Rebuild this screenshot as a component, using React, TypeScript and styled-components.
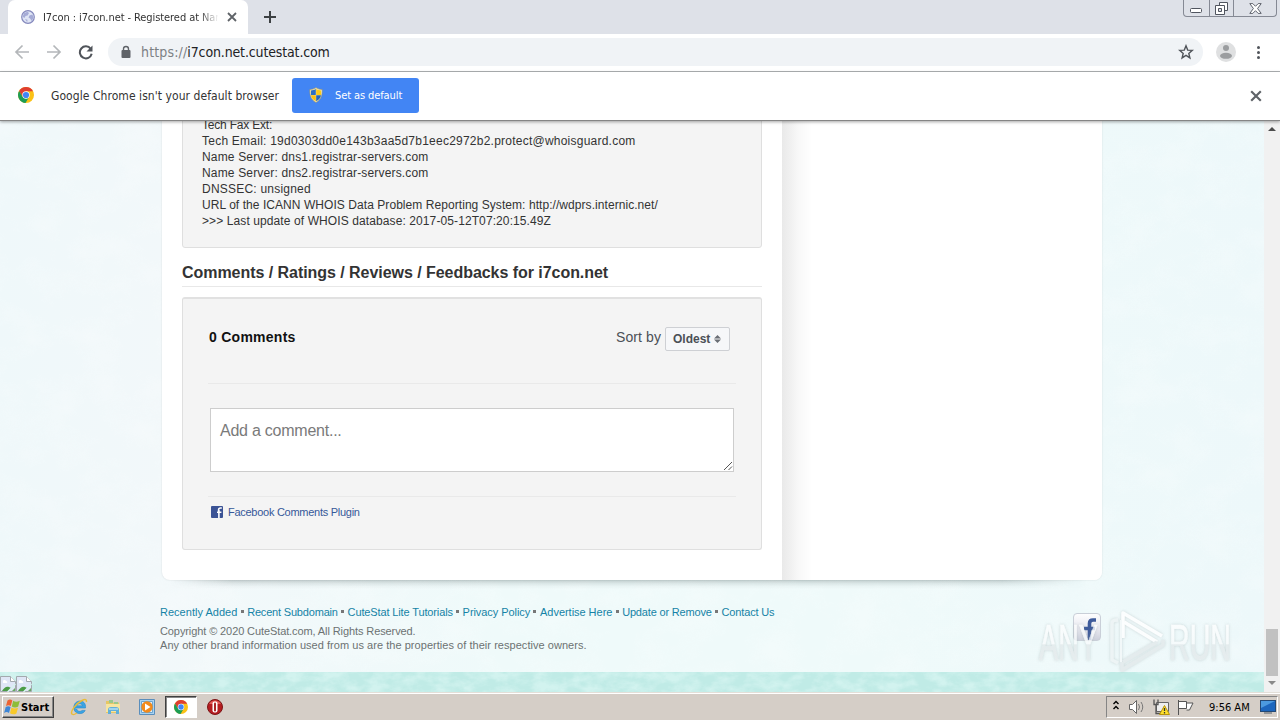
import React from "react"
import styled, { createGlobalStyle, css } from "styled-components"

const ui = `"DejaVu Sans Condensed", "DejaVu Sans", sans-serif`
const arial = `"Liberation Sans", Arial, sans-serif`

const GlobalStyle = createGlobalStyle`
	* {
		box-sizing: border-box;
	}

	body {
		margin: 0;
		overflow: hidden;
	}
`

const StyledScreen = styled.div`
	width: 1280px;
	height: 720px;
	display: flex;
	flex-direction: column;
	position: relative;
	overflow: hidden;
	background: #fff;
	font-family: ${arial};
`

const Text = styled.span<{ $size: number; $gap?: number; $color?: string; $bold?: boolean; $ui?: boolean }>`
	font-family: ${(props) => (props.$ui ? ui : arial)};
	font-size: ${(props) => props.$size}px;
	letter-spacing: ${(props) => props.$gap || 0}px;
	color: ${(props) => props.$color || "#333"};
	font-weight: ${(props) => (props.$bold ? 700 : 400)};
	white-space: pre;
`

/* Browser chrome */

const StyledTabStrip = styled.div`
	height: 34px;
	flex: none;
	display: flex;
	background: #dee1e8;
	padding-left: 8px;
`
const StyledTab = styled.div`
	width: 240px;
	height: 34px;
	display: flex;
	align-items: center;
	padding: 0 11px 0 13px;
	background: #fff;
	border-radius: 7px 7px 0 0;
`
const StyledTabTitle = styled.div`
	width: 175px;
	margin-left: 8px;
	overflow: hidden;
	line-height: 16px;
	mask-image: linear-gradient(90deg, #000 156px, transparent 176px);
`
const StyledTabClose = styled.div`
	margin-left: auto;
	display: flex;
`
const StyledNewTab = styled.div`
	display: flex;
	align-items: center;
	padding-left: 15px;
`
const StyledWindowButtons = styled.div`
	display: flex;
	margin: 0 3px 0 auto;
	width: 94px;
	height: 17px;
	border: 1px solid #858994;
	border-top: 0;
	border-radius: 0 0 4px 4px;
`
const StyledWindowButton = styled.div<{ $width: number }>`
	width: ${(props) => props.$width}px;
	display: flex;
	align-items: center;
	justify-content: center;

	& + & {
		border-left: 1px solid #858994;
	}
`
const StyledToolbar = styled.div`
	height: 38px;
	flex: none;
	display: flex;
	align-items: center;
	padding: 0 14px 1px;
	border-bottom: 1px solid #b0b3b5;

	> svg {
		flex: none;
	}
`
const StyledAddress = styled.div`
	width: 1095px;
	height: 28px;
	display: flex;
	align-items: center;
	margin-left: 14px;
	margin-right: 12px;
	padding: 0 9px 0 12px;
	border-radius: 14px;
	background: #f0f3f6;

	> svg:last-child {
		margin-left: auto;
	}
`
const StyledUrl = styled.div`
	margin-left: 9px;
	line-height: 18px;
`
const StyledInfoBar = styled.div`
	height: 49px;
	flex: none;
	display: flex;
	align-items: center;
	padding: 0 18px 2px;
	border-bottom: 1px solid #858585;
	background: #fff;
	position: relative;
	z-index: 1;
	box-shadow: 0 1px 3px rgba(0, 0, 0, 0.35);
`
const StyledInfoText = styled.div`
	width: 241px;
	margin-left: 17px;
	line-height: 18px;
`
const StyledDefaultButton = styled.div`
	width: 127px;
	height: 35px;
	display: flex;
	align-items: center;
	padding-left: 16px;
	border-radius: 3px;
	background: #4285f4;
`
const StyledButtonText = styled.div`
	margin-left: 11px;
	line-height: 16px;
`
const StyledInfoClose = styled.div`
	display: flex;
	margin-left: auto;
	padding-top: 2px;
`

/* Site */

const StyledViewport = styled.div`
	height: 571px;
	flex: none;
	display: flex;
`
const StyledPage = styled.div`
	width: 1264px;
	height: 571px;
	position: relative;
	overflow: hidden;
	background: linear-gradient(90deg, #eff8fa 0, #f2f8fa 160px, #effafa 500px, #effafa 900px, #edf8fa 1264px);
`
const StyledTexture = styled.svg`
	position: absolute;
	left: 0;
	top: 0;
`
const StyledMain = styled.div`
	height: 551px;
	position: relative;
	padding-left: 162px;
`
const StyledCard = styled.div`
	width: 940px;
	height: 459px;
	display: flex;
	border-radius: 0 0 8px 8px;
	background: #fff;
	box-shadow: 0 0 2px rgba(0, 0, 0, 0.12);
`
const StyledShade = styled.div`
	width: 940px;
	height: 9px;
	background: linear-gradient(rgba(60, 80, 80, 0.26), rgba(70, 90, 90, 0.13) 35%, rgba(80, 100, 100, 0.04) 70%, transparent);
	mask-image: linear-gradient(90deg, transparent 8px, #000 70px, #000 840px, transparent 925px);
`
const StyledContent = styled.div`
	width: 620px;
	padding: 0 20px;
	overflow: hidden;
	border-radius: 0 0 0 8px;
`
const StyledSidebar = styled.div`
	width: 320px;
	border-radius: 0 0 8px;
	background: linear-gradient(90deg, #e9e9e9 0, #f0f0f0 8px, #f8f8f8 16px, #fff 30px);
`
const panel = css`
	border: 1px solid #dfdfdf;
	border-radius: 3px;
	background: #f4f4f4;
`
const StyledWhois = styled.div`
	${panel}
	height: 137px;
	margin-top: -10px;
	padding: 5px 19px;
	display: flex;
	flex-direction: column;
	line-height: 16px;
`
const StyledHeading = styled.div`
	height: 39px;
	margin-bottom: 10px;
	padding-top: 15px;
	border-bottom: 1px solid #e8e8e8;
	line-height: 20px;
`
const StyledComments = styled.div`
	${panel}
	height: 253px;
	padding: 0 25px;
	border-top: 2px solid #e1e1e1;
`
const StyledCommentsHead = styled.div`
	height: 85px;
	padding: 28px 6px 0 1px;
	display: flex;
	align-items: flex-start;
	border-bottom: 1px solid #e9e9e9;
	line-height: 20px;
`
const StyledSort = styled.div`
	display: flex;
	margin-left: auto;
`
const StyledSelect = styled.div`
	width: 65px;
	height: 24px;
	display: flex;
	align-items: center;
	justify-content: space-between;
	margin-left: 4px;
	padding: 0 8px 0 7px;
	border: 1px solid #ced0d4;
	border-radius: 2px;
	background: #f6f7f9;
`
const StyledTextarea = styled.div`
	width: 524px;
	height: 64px;
	display: flex;
	justify-content: space-between;
	margin: 24px 0 24px 2px;
	padding: 12px 0 0 9px;
	border: 1px solid #cdcdcd;
	background: #fff;
	line-height: 20px;

	svg {
		align-self: flex-end;
	}
`
const StyledPlugin = styled.div`
	display: flex;
	align-items: center;
	gap: 5px;
	padding: 8px 0 0 3px;
	border-top: 1px solid #e9e9e9;
	line-height: 14px;
`
const StyledFooter = styled.div`
	display: flex;
	justify-content: space-between;
	width: 941px;
	margin-left: -2px;
	padding-top: 13px;
`
const StyledFooterText = styled.div`
	display: flex;
	flex-direction: column;
	line-height: 14px;
`
const StyledLinks = styled.div`
	height: 19px;
	display: flex;
	align-items: center;
	margin-bottom: 3px;
`
const StyledDot = styled.i`
	width: 3px;
	height: 3px;
	margin: 0 3.6px 1px 3.2px;
	background: #777;
`
const StyledBadge = styled.div`
	width: 28px;
	height: 28px;
	margin-top: 11px;
	display: flex;
	border: 1px solid #c9cfd8;
	border-radius: 4px;
	background: linear-gradient(#fdfdfe, #e7e7ef 60%, #cdd0dc);
`
const StyledStrip = styled.div`
	height: 20px;
	display: flex;
	align-items: center;
	position: relative;
	overflow: hidden;
	padding-top: 3px;
	background: #c0ebe6;

	> svg + svg {
		position: relative;
		flex: none;
	}
`
const StyledScrollbar = styled.div`
	width: 16px;
	display: flex;
	flex-direction: column;
	align-items: center;
	background: #f1f1f1;
	padding: 6px 0 7px;
`
const StyledThumb = styled.div`
	width: 12px;
	height: 47px;
	margin: auto 0 5px;
	background: #c1c1c1;
`
const StyledArrow = styled.i<{ $down?: boolean }>`
	border: 4px solid transparent;
	${(props) =>
		props.$down
			? css`
					border-top-color: #8a8a8a;
					border-bottom: 0;
			  `
			: css`
					border-bottom-color: #4c4c4c;
					border-top: 0;
			  `}
`

/* Desktop */

const StyledTaskbar = styled.div`
	height: 28px;
	flex: none;
	display: flex;
	align-items: center;
	border-top: 1px solid #e3dfd8;
	background: #d5cec7;
	box-shadow: inset 0 1px #fff;
	padding: 1px 2px 0;
`
const StyledStart = styled.div`
	width: 52px;
	height: 22px;
	display: flex;
	align-items: center;
	padding-left: 1px;
	border: 1px solid;
	border-color: #fff #404040 #404040 #fff;
	box-shadow: inset -1px -1px #888;
`
const StyledTask = styled.div<{ $active?: boolean }>`
	width: 32px;
	height: 22px;
	display: flex;
	align-items: center;
	justify-content: center;
	margin-right: 2px;
	border: 1px solid transparent;

	${(props) =>
		props.$active &&
		css`
			background: #fff;
			border-color: #404040 #fff #fff #404040;
			box-shadow: inset 1px 1px #888;
		`}
`
const StyledTasks = styled.div`
	display: flex;
	margin-left: 9px;
`
const StyledTray = styled.div`
	width: 172px;
	height: 22px;
	margin-left: auto;
	display: flex;
	align-items: center;
	padding-left: 5px;
	border: 1px solid;
	border-color: #858585 #fff #fff #858585;

	> svg {
		flex: none;
	}
`
const StyledClock = styled.div`
	width: 51px;
	margin-left: 15px;
	line-height: 16px;
`
const StyledWatermark = styled.svg`
	position: absolute;
	left: 1030px;
	top: 604px;
`

const ChromeIcon = ({ size }: { size: number }) => (
	<svg width={size} height={size} viewBox="0 0 16 16">
		<circle cx="8" cy="8" r="8" fill="#fbc116" />
		<path d="M8 4.2H15A8 8 0 0 0 1.1 4L4.7 10 8 8z" fill="#df3e30" />
		<path d="M1.1 4A8 8 0 0 0 7.5 16L11.2 9.8 8 11.6 4.7 9.9z" fill="#1c9d55" />
		<circle cx="8" cy="8" r="3.7" fill="#fff" />
		<circle cx="8" cy="8" r="3.1" fill="#4285f4" />
	</svg>
)

const GlobeIcon = () => (
	<svg width="14" height="14" viewBox="0 0 14 14">
		<circle cx="7" cy="7" r="6.3" fill="#dfe5f5" stroke="#8589bd" strokeWidth="1.2" />
		<path d="M3 3.2L6.4 1.7 8 3 6.6 5.5 4.5 6 3.5 8 1.6 6.7zM8.4 5.4l3-1 1.2 3-1.9 3.6-1.6-2.6-1.6-.8zM4 9l2.5.8-.3 2.5z" fill="#a5abd6" />
	</svg>
)

const CloseIcon = ({ size, color }: { size: number; color: string }) => (
	<svg width={size} height={size} viewBox="0 0 10 10">
		<path d="M1 1l8 8M9 1L1 9" stroke={color} strokeWidth="1.8" />
	</svg>
)

const ShieldIcon = () => (
	<svg width="16" height="16" viewBox="0 0 16 16">
		<path d="M8 .6C6 2 3.8 2.4 1.8 2.4 1.6 8 2.6 12.6 8 15.5 13.4 12.6 14.4 8 14.2 2.4 12.2 2.4 10 2 8 .6z" fill="#f0e6b4" stroke="#8a8a72" strokeWidth=".6" />
		<path d="M7.8 2C6.2 3 4.6 3.4 3 3.5V8h4.8z" fill="#2d6fc4" />
		<path d="M8.2 2c1.6 1 3.2 1.4 4.8 1.5V8H8.2z" fill="#fcca18" />
		<path d="M3 8.3c.5 2.7 2 4.6 4.8 6V8.3z" fill="#fcc010" />
		<path d="M13 8.3c-.5 2.7-2 4.6-4.8 6V8.3z" fill="#2765b8" />
	</svg>
)

const BrokenImage = () => (
	<svg width="16" height="16" viewBox="0 0 16 16">
		<path d="M.5 15.5V.5h10l5 5v10z" fill="#dfe6f6" stroke="#a3a9ae" />
		<path d="M10.5.5v5h5" fill="#fff" stroke="#a3a9ae" />
		<path d="M3 6a1.5 1.5 0 0 1 3-1 1.2 1.2 0 0 1 1 2H3z" fill="#fff" />
		<path d="M2 15c2-3 4-5 7-4l2 1-3 3z" fill="#4c9c46" />
		<path d="M7.5 16l8-8" stroke="#d5f1ee" strokeWidth="1.5" />
		<path d="M12 15l3-3v3z" fill="#65aa5f" />
	</svg>
)

const StartIcon = () => (
	<svg width="17" height="16" viewBox="0 0 17 16">
		<path d="M3.5 1.5C5.5 0 7 .5 8.3 1.4L6.8 7C5.3 6 3.8 5.9 2 7.1z" fill="#ec6332" />
		<path d="M9.2 1.8c1.9 1.3 4 1.3 6.6 0l-1.6 5.8c-1.9 1.3-4.5 1.2-6.4 0z" fill="#8dbd38" />
		<path d="M1.7 8c1.9-1.2 3.4-1 4.9 0L5 13.9C3.4 12.9 1.9 12.8.1 13.9z" fill="#3e86d6" />
		<path d="M7.5 8.5c1.8 1.2 4.2 1.3 6.5.2l-1.6 5.7c-2 1.2-4.4 1.1-6.4-.1z" fill="#f8c929" />
	</svg>
)

const IeIcon = () => (
	<svg width="18" height="18" viewBox="0 0 18 18">
		<path d="M4.5 10H15.5C16 5.5 13.5 3 10 3S3.8 5.8 3.8 9.5 6.3 15.6 10 15.6c2.6 0 4.4-1.3 5.2-3.2h-3.2c-2 1.8-4.8.9-5.2-1.5M6.8 7.8c.9-2.7 4.9-2.7 5.7 0z" fill="#39a4e4" stroke="#2787ca" strokeWidth=".6" fillRule="evenodd" />
		<path d="M2.2 16.3C-.5 14 6 5.5 12 2.5c3-1.5 5-1.3 4.3 1.5" fill="none" stroke="#e9bc37" strokeWidth="1.5" />
		<path d="M2.2 16.3c1 .7 3-.1 4.5-1.3" fill="none" stroke="#e9bc37" strokeWidth="1.2" />
	</svg>
)

const FolderIcon = () => (
	<svg width="16" height="16" viewBox="0 0 16 16">
		<path d="M1 2h5l1.5 1.5H14V14H1z" fill="#e6c764" />
		<path d="M4 1h4v3H4zM9 3h4v3H9z" fill="#9ac88c" />
		<path d="M1 5h14v8H1z" fill="#f7e5a0" />
		<path d="M3 15v-4c0-2 1-3 3-3h5c2 0 3 1 3 3v4h-3v-3H6v3z" fill="#62afd9" />
		<path d="M4 10h9" stroke="#b5e0f3" strokeWidth="1.5" />
	</svg>
)

const PlayerIcon = () => (
	<svg width="16" height="16" viewBox="0 0 16 16">
		<path d="M.5.5h15v15H.5z" fill="#a9d3f2" stroke="#5a8ebc" />
		<path d="M2.5 2.5h11v11h-11z" fill="#e5f1fa" stroke="#6ba4cf" />
		<circle cx="8" cy="8" r="5.7" fill="#f28a1c" />
		<path d="M6 4.5L11.5 8 6 11.5z" fill="#fff" />
	</svg>
)

const OperaIcon = () => (
	<svg width="16" height="16" viewBox="0 0 16 16">
		<circle cx="8" cy="8" r="7.5" fill="#b51c20" stroke="#7c1516" />
		<path d="M2 5a7 7 0 0 1 12 0z" fill="#e35a58" />
		<rect x="5.5" y="2.5" width="5" height="11" rx="2" fill="#fff" />
		<rect x="7" y="3.5" width="2" height="9" rx="1" fill="#a92325" />
	</svg>
)

const Watermark = () => (
	<StyledWatermark width="210" height="72" viewBox="0 0 210 72">
		<defs>
			<linearGradient id="metal" x1="0" y1="0" x2="0" y2="1">
				<stop offset="0" stopColor="#fff" />
				<stop offset=".52" stopColor="#f8fbfc" />
				<stop offset=".53" stopColor="#e2e9eb" />
				<stop offset="1" stopColor="#e6eced" />
			</linearGradient>
			<filter id="soft" x="-10%" y="-10%" width="120%" height="120%">
				<feDropShadow dx="0" dy="0" stdDeviation="1.5" floodColor="#8d9c9e" floodOpacity=".5" />
			</filter>
		</defs>
		<g filter="url(#soft)" opacity=".8" fill="url(#metal)" stroke="url(#metal)" strokeWidth=".6" fontFamily="Liberation Sans, Arial, sans-serif" fontSize="50">
			<text x="9" y="56" textLength="59" lengthAdjust="spacingAndGlyphs">ANY</text>
			<text x="139" y="56" textLength="62" lengthAdjust="spacingAndGlyphs">RUN</text>
		</g>
		<g filter="url(#soft)" opacity=".8" fill="none" strokeWidth="3.500" strokeLinejoin="round">
			<path d="M88 59l-6-3V19q0-3 6-3" stroke="#edf3f4" />
			<path d="M93 34V9l39 23" stroke="#fff" />
			<path d="M91 16v42" stroke="#f3f8f9" strokeWidth="2" />
			<path d="M94 18l33 20" stroke="#fff" />
			<path d="M92 58v8l41-25v-5" stroke="#e2e9eb" />
			<path d="M93 58l34-20" stroke="#e2e9eb" />
		</g>
	</StyledWatermark>
)

const whois = [
	["Tech Fax Ext:", -0.2],
	["Tech Email: 19d0303dd0e143b3aa5d7b1eec2972b2.protect@whoisguard.com", 0.235],
	["Name Server: dns1.registrar-servers.com", 0.165],
	["Name Server: dns2.registrar-servers.com", 0.165],
	["DNSSEC: unsigned", 0.22],
	["URL of the ICANN WHOIS Data Problem Reporting System: http://wdprs.internic.net/", 0.06],
	[">>> Last update of WHOIS database: 2017-05-12T07:20:15.49Z", 0.1],
] as [string, number][]

const links = [
	["Recently Added", 0.02],
	["Recent Subdomain", -0.18],
	["CuteStat Lite Tutorials", -0.13],
	["Privacy Policy", -0.06],
	["Advertise Here", -0.03],
	["Update or Remove", -0.17],
	["Contact Us", -0.15],
] as [string, number][]

const BrowserBar = () => (
	<>
		<StyledTabStrip>
			<StyledTab>
				<GlobeIcon />
				<StyledTabTitle>
					<Text $ui $size={11} $gap={-0.08}>I7con : i7con.net - Registered at Nam</Text>
				</StyledTabTitle>
				<StyledTabClose>
					<CloseIcon size={10} color="#5f6368" />
				</StyledTabClose>
			</StyledTab>
			<StyledNewTab>
				<svg width="14" height="14" viewBox="0 0 14 14">
					<path d="M7 1v12M1 7h12" stroke="#3c4043" strokeWidth="2" />
				</svg>
			</StyledNewTab>
			<StyledWindowButtons>
				<StyledWindowButton $width={25}>
					<svg width="13" height="9" viewBox="0 0 13 9">
						<rect x=".5" y="4.5" width="11" height="4" rx="1" fill="#fff" stroke="#50555f" />
					</svg>
				</StyledWindowButton>
				<StyledWindowButton $width={25}>
					<svg width="13" height="13" viewBox="0 0 13 13">
						<path d="M4.5.5h8v8h-4v-4h-4z" fill="#fff" stroke="#50555f" />
						<path d="M.5 3.5h9v9h-9z" fill="#fff" stroke="#50555f" />
						<path d="M3.5 6.5h3v3h-3z" fill="#dee1e8" stroke="#50555f" />
					</svg>
				</StyledWindowButton>
				<StyledWindowButton $width={43}>
					<svg width="13" height="11" viewBox="0 0 13 11">
						<path d="M.8.6h3L6.5 3.3 9.2.6h3L8.6 5.5l3.6 4.9h-3L6.5 7.7l-2.7 2.7h-3l3.6-4.9z" fill="#fff" stroke="#50555f" strokeWidth=".9" />
					</svg>
				</StyledWindowButton>
			</StyledWindowButtons>
		</StyledTabStrip>
		<StyledToolbar>
			<svg width="80" height="16" viewBox="0 0 80 16" fill="none" strokeWidth="1.7">
				<path d="M15 8H2M8.5 1.5L2 8l6.5 6.5" stroke="#b4b7ba" />
				<path d="M33 8h13M39.5 1.5L46 8l-6.5 6.5" stroke="#b4b7ba" />
				<path d="M76.7 4.8A6 6 0 1 0 77.7 9.8" stroke="#50545a" strokeWidth="2" />
				<path d="M78.5 1.5v6h-6z" fill="#50545a" />
			</svg>
			<StyledAddress>
				<svg width="12" height="14" viewBox="0 0 12 14">
					<path d="M3.5 6V4a2.5 2.5 0 0 1 5 0v2" fill="none" stroke="#5f6368" strokeWidth="1.4" />
					<rect x="1.5" y="5" width="9" height="8" rx="1" fill="#5f6368" />
				</svg>
				<StyledUrl>
					<Text $ui $size={14} $gap={0.15} $color="#7c8084">https://</Text>
					<Text $ui $size={14} $gap={-0.14} $color="#202124">i7con.net.cutestat.com</Text>
				</StyledUrl>
				<svg width="16" height="16" viewBox="0 0 16 16">
					<path d="M8 1.8l1.7 4.3 4.6.3-3.5 3 1.1 4.5L8 11.4l-3.9 2.5 1.1-4.5-3.5-3 4.6-.3z" fill="none" stroke="#50545a" strokeWidth="1.4" />
				</svg>
			</StyledAddress>
			<svg width="46" height="20" viewBox="0 0 46 20">
				<circle cx="11" cy="10" r="10" fill="#dfe0e1" />
				<circle cx="11" cy="6" r="3" fill="#9b9d9f" />
				<ellipse cx="11" cy="13.8" rx="6" ry="3" fill="#9b9d9f" />
				<circle cx="43.500" cy="5.500" r="1.500" fill="#50545a" />
				<circle cx="43.500" cy="10.500" r="1.500" fill="#50545a" />
				<circle cx="43.500" cy="15.500" r="1.500" fill="#50545a" />
			</svg>
		</StyledToolbar>
		<StyledInfoBar>
			<ChromeIcon size={16} />
			<StyledInfoText>
				<Text $ui $size={12} $gap={0.06}>Google Chrome isn't your default browser</Text>
			</StyledInfoText>
			<StyledDefaultButton>
				<ShieldIcon />
				<StyledButtonText>
					<Text $ui $size={11} $gap={-0.1} $color="#fff">Set as default</Text>
				</StyledButtonText>
			</StyledDefaultButton>
			<StyledInfoClose>
				<CloseIcon size={12} color="#5f6368" />
			</StyledInfoClose>
		</StyledInfoBar>
	</>
)

const Comments = () => (
	<StyledComments>
		<StyledCommentsHead>
			<Text $size={14} $gap={0.26} $bold $color="#111">0 Comments</Text>
			<StyledSort>
				<Text $size={14} $gap={0.1} $color="#4b4f56">Sort by</Text>
				<StyledSelect>
					<Text $size={12} $bold $color="#4b4f56">Oldest</Text>
					<svg width="7" height="8" viewBox="0 0 7 8">
						<path d="M0 3.5L3.5 0 7 3.5zM0 4.5h7L3.5 8z" fill="#6a6e75" />
					</svg>
				</StyledSelect>
			</StyledSort>
		</StyledCommentsHead>
		<StyledTextarea>
			<Text $size={16} $gap={-0.24} $color="#7a7a7a">Add a comment...</Text>
			<svg width="10" height="10" viewBox="0 0 10 10">
				<path d="M1 9l8-8M5.5 9L9 5.5" stroke="#555" />
			</svg>
		</StyledTextarea>
		<StyledPlugin>
			<svg width="12" height="12" viewBox="0 0 12 12">
				<rect width="12" height="12" rx="1" fill="#3b5395" />
				<path d="M10.8 2H9.6C8.2 2 7.6 2.8 7.6 4v1.3M6 6.2h4.4M7.9 4v8" fill="none" stroke="#fff" strokeWidth="1.6" />
			</svg>
			<Text $size={11} $gap={-0.27} $color="#365899">Facebook Comments Plugin</Text>
		</StyledPlugin>
	</StyledComments>
)

const Site = () => (
	<StyledViewport>
		<StyledPage>
			<StyledTexture width="1264" height="551">
				<filter id="paper">
					<feTurbulence type="fractalNoise" baseFrequency=".025 .035" numOctaves="4" seed="4" />
					<feColorMatrix values="0 0 0 0 1  0 0 0 0 1  0 0 0 0 1  2 0 0 0 -.8" />
				</filter>
				<rect width="1264" height="551" filter="url(#paper)" opacity=".22" />
			</StyledTexture>
			<StyledMain>
				<StyledCard>
					<StyledContent>
						<StyledWhois>
							{whois.map(([line, gap]) => (
								<Text key={line} $size={12} $gap={gap}>{line}</Text>
							))}
						</StyledWhois>
						<StyledHeading>
							<Text $size={16} $gap={-0.045} $bold>Comments / Ratings / Reviews / Feedbacks for i7con.net</Text>
						</StyledHeading>
						<Comments />
					</StyledContent>
					<StyledSidebar />
				</StyledCard>
				<StyledShade />
				<StyledFooter>
					<StyledFooterText>
						<StyledLinks>
							{links.map(([label, gap], i) => (
								<React.Fragment key={label}>
									{i > 0 && <StyledDot />}
									<Text $size={11} $gap={gap} $color="#1583a6">{label}</Text>
								</React.Fragment>
							))}
						</StyledLinks>
						<Text $size={11} $gap={-0.1} $color="#6c7272">Copyright © 2020 CuteStat.com, All Rights Reserved.</Text>
						<Text $size={11} $gap={0.04} $color="#6c7272">Any other brand information used from us are the properties of their respective owners.</Text>
					</StyledFooterText>
					<StyledBadge>
						<svg width="26" height="26" viewBox="0 0 26 26">
							<path d="M22 6h-3c-2.5 0-3.5 1-3.5 3.5V27M10 14.5h11" fill="none" stroke="#3f5b9b" strokeWidth="3.6" />
						</svg>
					</StyledBadge>
				</StyledFooter>
			</StyledMain>
			<StyledStrip>
				<StyledTexture width="1264" height="20">
					<filter id="grain">
						<feTurbulence type="fractalNoise" baseFrequency=".06 .1" numOctaves="4" seed="8" />
						<feColorMatrix values="0 0 0 0 .85  0 0 0 0 1  0 0 0 0 .98  2.5 0 0 0 -.9" />
					</filter>
					<rect width="1264" height="20" filter="url(#grain)" opacity=".4" />
				</StyledTexture>
				<BrokenImage />
				<BrokenImage />
			</StyledStrip>
		</StyledPage>
		<StyledScrollbar>
			<StyledArrow />
			<StyledThumb />
			<StyledArrow $down />
		</StyledScrollbar>
	</StyledViewport>
)

const Taskbar = () => (
	<StyledTaskbar>
		<StyledStart>
			<StartIcon />
			<Text $ui $size={11} $bold $color="#000">Start</Text>
		</StyledStart>
		<StyledTasks>
			<StyledTask><IeIcon /></StyledTask>
			<StyledTask><FolderIcon /></StyledTask>
			<StyledTask><PlayerIcon /></StyledTask>
			<StyledTask $active><ChromeIcon size={14} /></StyledTask>
			<StyledTask><OperaIcon /></StyledTask>
		</StyledTasks>
		<StyledTray>
			<svg width="82" height="18" viewBox="0 0 82 18" fill="none">
				<path d="M1.5 6L4 3.5 6.5 6M1.5 11L4 8.5 6.5 11" stroke="#000" strokeWidth="1.4" />
				<path d="M17.5 6.5h3l4-4v13l-4-4h-3z" fill="#fff" stroke="#666" />
				<path d="M26.5 6q2 3 0 6M29 4q3.5 5 0 10" stroke="#777" />
				<path d="M44.5 4.5h12v9h-12z" fill="#eee" stroke="#666" />
				<path d="M42 1.5v5h4v-5M44 6.5v9h5" stroke="#555" strokeWidth="1.3" />
				<path d="M52.5 7.5l5 9h-10z" fill="#ffe12c" stroke="#b89409" />
				<path d="M52.5 10v3M52.5 14v1.4" stroke="#333" strokeWidth="1.3" />
				<path d="M66.5 17V2M67 3.5h7.5v7H67M74.5 5H81l-2 4-1.5 3h-3" fill="#fff" stroke="#555" />
			</svg>
			<StyledClock>
				<Text $ui $size={11} $color="#000">9:56 AM</Text>
			</StyledClock>
			<svg width="16" height="14" viewBox="0 0 16 14">
				<rect x=".5" y=".5" width="15" height="11" fill="#1d66bd" stroke="#244975" />
				<path d="M1 1h14L1 8z" fill="#4c9adf" />
				<path d="M4 13h8" stroke="#525d68" />
			</svg>
		</StyledTray>
	</StyledTaskbar>
)

const App = () => (
	<StyledScreen>
		<GlobalStyle />
		<BrowserBar />
		<Site />
		<Taskbar />
		<Watermark />
	</StyledScreen>
)

export default App
